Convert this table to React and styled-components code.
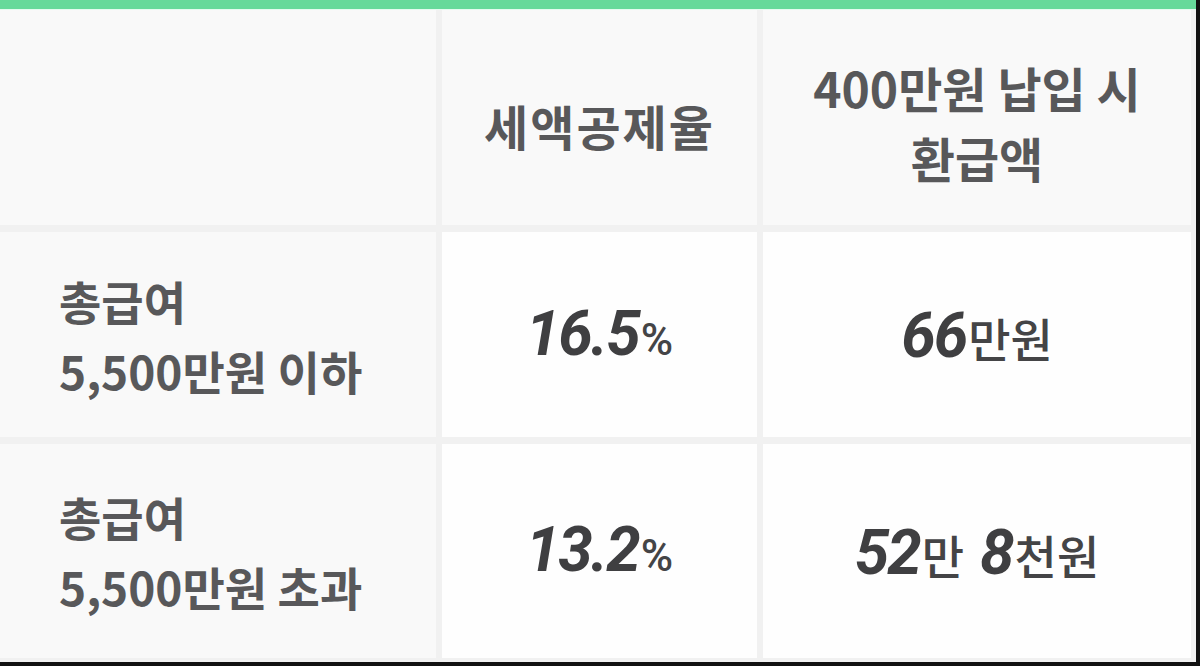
import React from 'react';
import styled, { createGlobalStyle } from 'styled-components';

const GlobalStyle = createGlobalStyle`
  html, body {
    margin: 0;
    padding: 0;
    background: #ffffff;
  }
  body {
    font-family: "Noto Sans CJK KR", "Noto Sans", sans-serif;
  }
`;

const Frame = styled.div`
  width: 1200px;
  height: 666px;
  box-sizing: border-box;
  border-right: 4px solid #111111;
  border-bottom: 4px solid #111111;
  background: #f1f1f1;
  overflow: hidden;
`;

const Table = styled.div`
  display: grid;
  grid-template-columns: 436px 315px 428px;
  grid-template-rows: 215px 205px 214px;
  column-gap: 6px;
  row-gap: 7px;
  padding: 1px 0 4px 0;
  border-top: 9px solid #66d99a;
  box-shadow: inset 0 1px 0 #e4fbef;
`;

const Cell = styled.div`
  display: flex;
  flex-direction: column;
  justify-content: center;
  align-items: ${(p) => (p.$left ? 'flex-start' : 'center')};
  padding: ${(p) => (p.$left ? '0 0 0 59px' : '0')};
  background: ${(p) => (p.$light ? '#fefefe' : '#f9f9f9')};
  color: #58585a;
  font-size: ${(p) => (p.$left ? 46 : 48)}px;
  font-weight: 700;
  line-height: 70px;
  text-align: center;
`;

const HeadText = styled.div`
  padding-top: ${(p) => p.$pt || 0}px;
  letter-spacing: ${(p) => p.$ls || 0}px;
`;

const Value = styled.div`
  display: flex;
  align-items: baseline;
  color: #3f3f41;
  padding-top: 4px;
`;

const Num = styled.span`
  font-family: Roboto, "Noto Sans", sans-serif;
  font-style: italic;
  font-weight: 700;
  font-size: 62px;
  letter-spacing: -2px;
  margin-right: 2px;
`;

const Unit = styled.span`
  font-size: ${(p) => p.$size || 46}px;
  font-weight: 500;
  color: #444446;
  margin-right: ${(p) => p.$gap || 0}px;
  font-family: ${(p) => (p.$latin ? 'Roboto, "Noto Sans", sans-serif' : '"Noto Sans CJK KR", sans-serif')};
`;

const rows = [
  { label: '5,500만원 이하', rate: '16.5', refund: [['66', '만원']] },
  { label: '5,500만원 초과', rate: '13.2', refund: [['52', '만', 16], ['8', '천원']] },
];

export default function App() {
  return (
    <>
      <GlobalStyle />
      <Frame>
        <Table>
          <Cell />
          <Cell>
            <HeadText $pt={14} $ls={2}>세액공제율</HeadText>
          </Cell>
          <Cell>
            <HeadText $pt={8}>
              400만원 납입 시
              <br />
              환급액
            </HeadText>
          </Cell>
          {rows.map((r) => (
            <React.Fragment key={r.label}>
              <Cell $left>
                <div>총급여</div>
                <div>{r.label}</div>
              </Cell>
              <Cell $light>
                <Value>
                  <Num>{r.rate}</Num>
                  <Unit $size={44} $latin>%</Unit>
                </Value>
              </Cell>
              <Cell $light>
                <Value>
                  {r.refund.map(([n, u, gap]) => (
                    <React.Fragment key={n}>
                      <Num>{n}</Num>
                      <Unit $gap={gap}>{u}</Unit>
                    </React.Fragment>
                  ))}
                </Value>
              </Cell>
            </React.Fragment>
          ))}
        </Table>
      </Frame>
    </>
  );
}
